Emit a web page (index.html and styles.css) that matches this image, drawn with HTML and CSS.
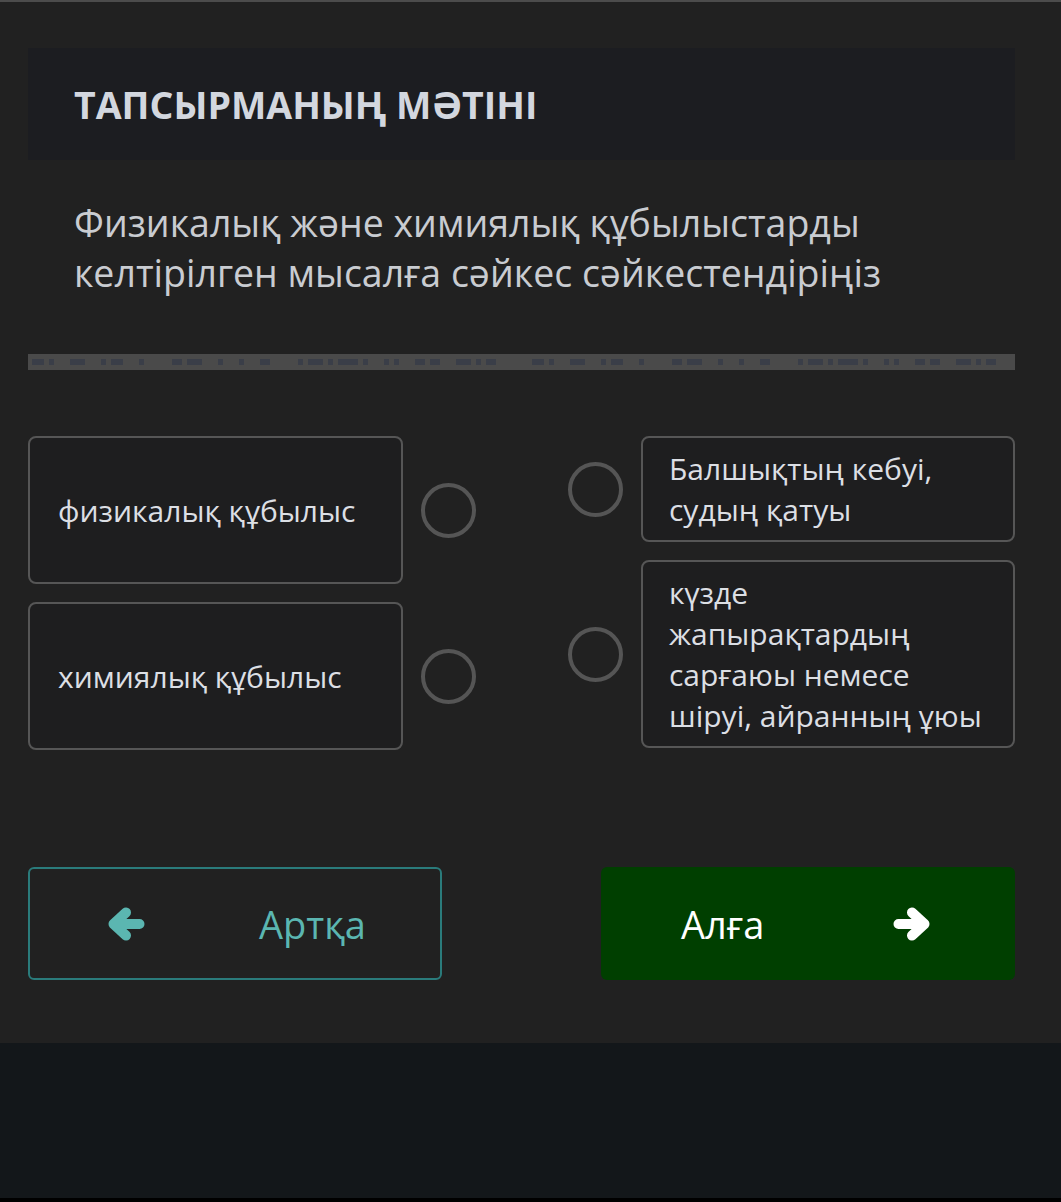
FILE: index.html
```html
<!DOCTYPE html>
<html lang="kk">
<head>
    <meta charset="UTF-8">
    <meta name="viewport" content="width=device-width, initial-scale=1.0">
    <title>Тапсырма</title>
    <link rel="stylesheet" href="styles.css">
</head>
<body>
    <div class="page">
        <div class="task-head">
            <h1>ТАПСЫРМАНЫҢ МӘТІНІ</h1>
        </div>
        <p class="task-text">Физикалық және химиялық құбылыстарды келтірілген мысалға сәйкес сәйкестендіріңіз</p>

        <div class="divider">
            <span class="d w12"></span><span class="d w5"></span><span class="gap"></span>
            <span class="d w15"></span><span class="gap"></span><span class="d w5"></span><span class="d w12"></span><span class="gap"></span><span class="d w5"></span>
            <span class="gap2"></span><span class="d w10"></span><span class="d w15"></span><span class="gap"></span><span class="d w5"></span><span class="gap"></span><span class="d w5"></span><span class="gap"></span><span class="d w10"></span>
            <span class="gap2"></span><span class="d w5"></span><span class="d w15"></span><span class="d w5"></span><span class="d w20"></span><span class="d w5"></span><span class="gap"></span><span class="d w5"></span><span class="d w5"></span><span class="gap"></span><span class="d w10"></span><span class="d w10"></span><span class="gap"></span><span class="d w15"></span><span class="d w5"></span><span class="d w10"></span>
            <span class="gap3"></span>
            <span class="d w12"></span><span class="d w5"></span><span class="gap"></span>
            <span class="d w15"></span><span class="gap"></span><span class="d w5"></span><span class="d w12"></span><span class="gap"></span><span class="d w5"></span>
            <span class="gap2"></span><span class="d w10"></span><span class="d w15"></span><span class="gap"></span><span class="d w5"></span><span class="gap"></span><span class="d w5"></span><span class="gap"></span><span class="d w10"></span>
            <span class="gap2"></span><span class="d w5"></span><span class="d w15"></span><span class="d w5"></span><span class="d w20"></span><span class="d w5"></span><span class="gap"></span><span class="d w5"></span><span class="d w5"></span><span class="gap"></span><span class="d w10"></span><span class="d w10"></span><span class="gap"></span><span class="d w15"></span><span class="d w5"></span><span class="d w10"></span>
        </div>

        <div class="match">
            <div class="col">
                <div class="row">
                    <div class="card tall">физикалық құбылыс</div>
                    <span class="dot"></span>
                </div>
                <div class="row">
                    <div class="card tall">химиялық құбылыс</div>
                    <span class="dot"></span>
                </div>
            </div>
            <div class="col">
                <div class="row">
                    <span class="dot"></span>
                    <div class="card">Балшықтың кебуі, судың қатуы</div>
                </div>
                <div class="row">
                    <span class="dot"></span>
                    <div class="card">күзде жапырақтардың сарғаюы немесе шіруі, айранның ұюы</div>
                </div>
            </div>
        </div>

        <div class="nav">
            <button class="btn btn-back" type="button">
                <svg class="arrow" viewBox="0 0 38 34"><path d="M19 5.5 L6.5 17 L19 28.5 M6.5 17 H32.5"/></svg>
                <span>Артқа</span>
            </button>
            <button class="btn btn-next" type="button">
                <span>Алға</span>
                <svg class="arrow" viewBox="0 0 38 34"><path d="M19 5.5 L31.5 17 L19 28.5 M31.5 17 H5.5"/></svg>
            </button>
        </div>
    </div>
    <div class="footer"></div>
</body>
</html>
```
FILE: styles.css
```css
body {
    font-family: "Open Sans", "Noto Sans", sans-serif;
    background-color: #212121;
    margin: 0;
    padding: 0;
    border-top: 2px solid #4c4c4c;
}
.page {
    padding: 46px 46px 63px 28px;
}
.task-head {
    background-color: #1c1d21;
    height: 112px;
    display: flex;
    align-items: center;
    padding-left: 46px;
}
h1 {
    margin: 0;
    font-size: 37.5px;
    font-weight: 700;
    color: #d3d7df;
}
.task-text {
    margin: 0;
    padding: 38px 46px 56px;
    font-size: 37.5px;
    line-height: 50px;
    color: #c9ccd1;
}
.divider {
    height: 16px;
    background-color: #4a4a4a;
    display: flex;
    align-items: center;
    gap: 5px;
    padding-left: 4px;
}
.d {
    height: 6px;
    background-color: #3a3e48;
}
.w5 { width: 5px; }
.w10 { width: 10px; }
.w12 { width: 12px; }
.w15 { width: 15px; }
.w20 { width: 20px; }
.gap { width: 6px; }
.gap2 { width: 18px; }
.gap3 { width: 26px; }
.match {
    display: flex;
    justify-content: space-between;
    margin-top: 66px;
}
.col {
    display: flex;
    flex-direction: column;
    gap: 18px;
}
.row {
    display: flex;
    align-items: center;
    gap: 18px;
}
.card {
    width: 374px;
    box-sizing: border-box;
    border: 2px solid #565656;
    border-radius: 8px;
    background-color: #1e1e1f;
    padding: 10px 26px;
    font-size: 30px;
    line-height: 41px;
    color: #dcdfe4;
}
.card.tall {
    width: 375px;
    height: 148px;
    display: flex;
    align-items: center;
    padding: 0 28px;
}
.dot {
    width: 47px;
    height: 47px;
    border: 4px solid #555555;
    border-radius: 50%;
    flex-shrink: 0;
}
.nav {
    display: flex;
    justify-content: space-between;
    margin-top: 117px;
}
.btn {
    width: 414px;
    height: 113px;
    border-radius: 6px;
    font-family: inherit;
    font-size: 38px;
    display: flex;
    align-items: center;
    cursor: pointer;
}
.btn-back {
    background-color: transparent;
    border: 2px solid #2a7b7b;
    color: #5bb6b1;
    padding: 0 0 0 77px;
    gap: 114px;
}
.btn-back .arrow {
    stroke: #5bb6b1;
}
.btn-next {
    background-color: #003f00;
    border: none;
    color: #ffffff;
    padding: 0 0 0 80px;
    gap: 129px;
}
.btn-next .arrow {
    stroke: #ffffff;
}
.arrow {
    width: 38px;
    height: 34px;
    fill: none;
    stroke-width: 10;
    stroke-linecap: round;
    stroke-linejoin: round;
}
.footer {
    height: 155px;
    background-color: #13171a;
    border-bottom: 4px solid #000;
}
```
